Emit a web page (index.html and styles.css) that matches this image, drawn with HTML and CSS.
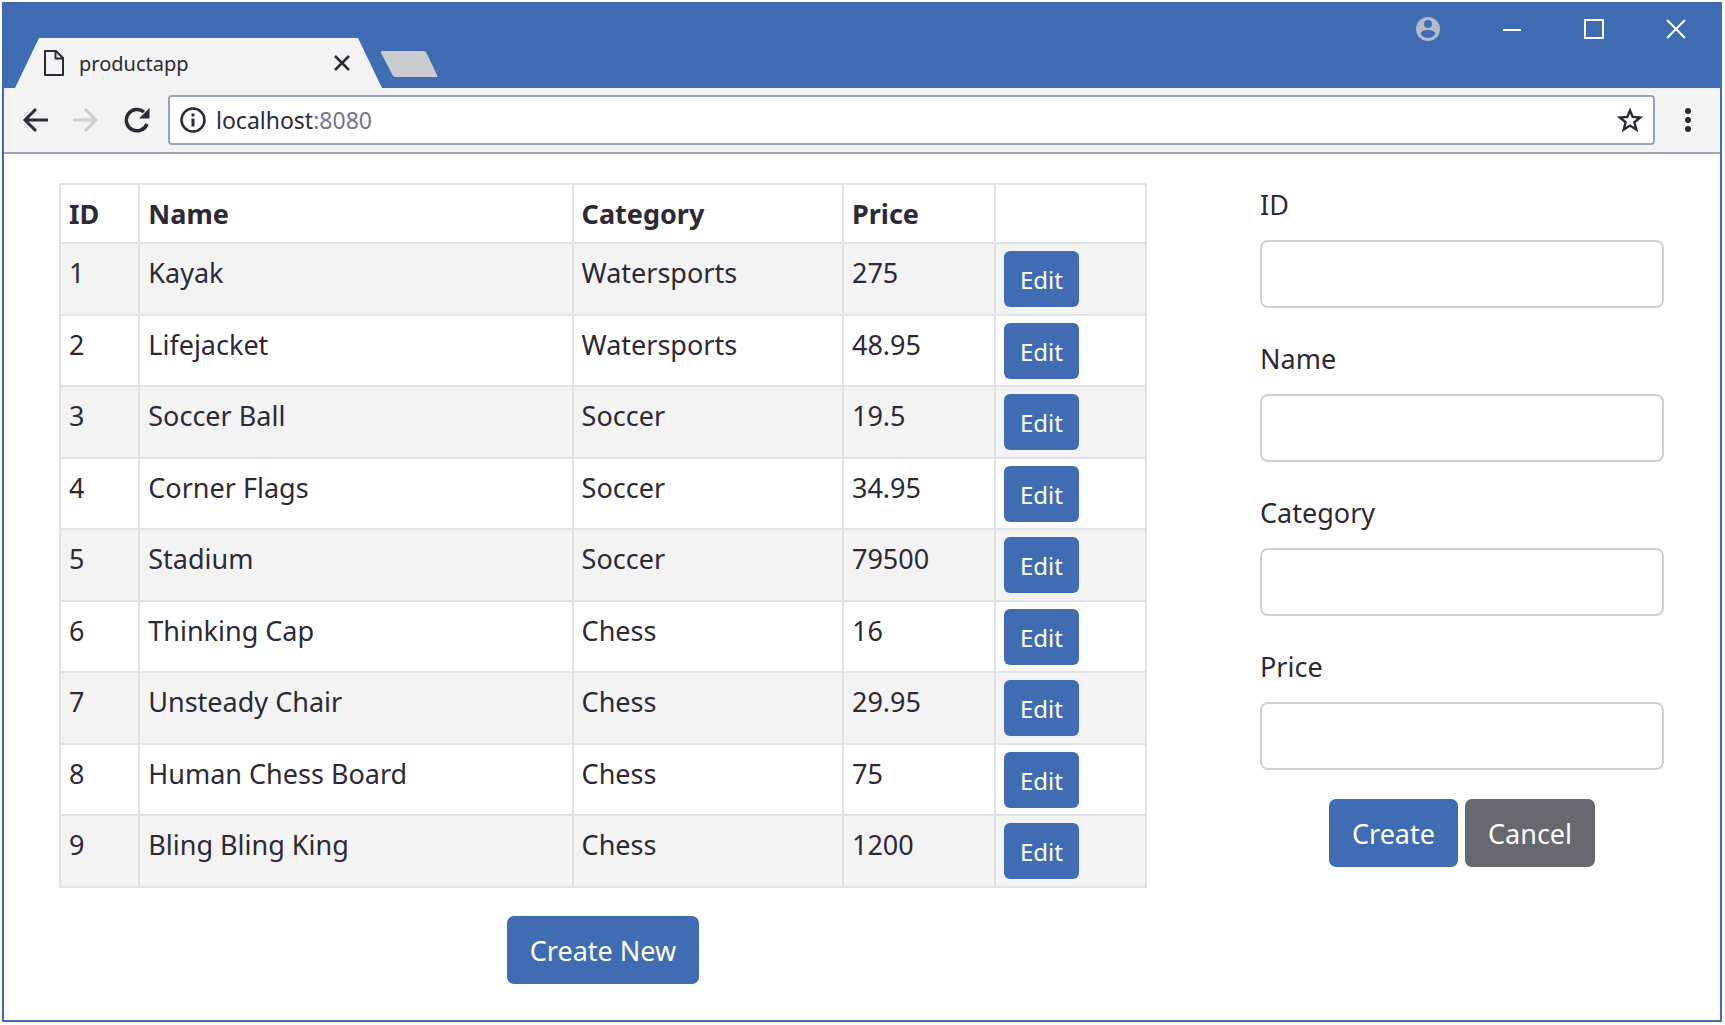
FILE: index.html
```html
<!DOCTYPE html>
<html lang="en">
<head>
<meta charset="utf-8">
<title>productapp</title>
<link rel="stylesheet" href="styles.css">
</head>
<body>
<div class="window">
  <header class="titlebar">
    <div class="tab">
      <svg class="tab-icon" width="20" height="26" viewBox="0 0 20 26" fill="none" stroke="currentColor" stroke-width="2" stroke-linejoin="round"><path d="M1 1h11l7 7v17H1z"/><path d="M11.500 1v7.500H19"/></svg>
      <span class="tab-title">productapp</span>
      <button class="icon-button tab-close" type="button" aria-label="Close tab"><svg width="16" height="16" viewBox="0 0 16 16" fill="none" stroke="currentColor" stroke-width="2.500"><path d="M1 1l14 14M15 1L1 15"/></svg></button>
    </div>
    <button class="icon-button new-tab" type="button" aria-label="New tab"><svg width="58" height="26" viewBox="0 0 58 26"><path fill="#cbcdd0" d="M2 0h41q3 0 4 3l10 21q1 2-1 2H16q-3 0-4-3L1 2Q0 0 2 0z"/></svg></button>
    <div class="window-controls">
      <button class="icon-button profile" type="button" aria-label="Profile"><svg width="24" height="26" viewBox="1 0 24 26"><path fill="currentColor" fill-rule="evenodd" d="M13 1a12 12 0 1 0 0 24 12 12 0 0 0 0-24zM13 4a4 4 0 1 1 0 8 4 4 0 0 1 0-8zM5.500 17.500C7 14.500 10 14 13 14s6 .5 7.500 3.500C19 20.500 16 22 13 22s-6-1.500-7.500-4.500z"/></svg></button>
      <button class="icon-button" type="button" aria-label="Minimize"><svg width="20" height="20" viewBox="0 0 20 20" stroke="currentColor" stroke-width="2"><path d="M1 11h18"/></svg></button>
      <button class="icon-button" type="button" aria-label="Maximize"><svg width="20" height="20" viewBox="0 0 20 20" fill="none" stroke="currentColor" stroke-width="2"><path d="M1 1h18v18H1z"/></svg></button>
      <button class="icon-button" type="button" aria-label="Close"><svg width="20" height="20" viewBox="0 0 20 20" stroke="currentColor" stroke-width="2"><path d="M1 1l18 18M19 1L1 19"/></svg></button>
    </div>
  </header>
  <nav class="toolbar" aria-label="Browser">
    <button class="icon-button" type="button" aria-label="Back"><svg width="26" height="26" viewBox="0 0 26 26" fill="none" stroke="currentColor" stroke-width="3"><path d="M26 13H3M14 2L3 13l11 11"/></svg></button>
    <button class="icon-button forward" type="button" aria-label="Forward"><svg width="26" height="26" viewBox="0 0 26 26" fill="none" stroke="currentColor" stroke-width="3"><path d="M0 13h23M12 2l11 11-11 11"/></svg></button>
    <button class="icon-button" type="button" aria-label="Reload"><svg width="26" height="26" viewBox="0 0 26 26" fill="none" stroke="currentColor" stroke-width="3.500"><path d="M23 17A10.700 10.700 0 1 1 20 5"/><path fill="currentColor" stroke="none" d="M25.500 1v10.500H15z"/></svg></button>
    <div class="address">
      <svg width="26" height="26" viewBox="0 0 26 26" fill="none" stroke="currentColor" stroke-width="2.500"><circle cx="13" cy="13" r="11.500"/><path stroke-width="3" d="M13 11.500v8M13 6.500v3"/></svg>
      <span class="url">localhost<span class="port">:8080</span></span>
      <button class="icon-button" type="button" aria-label="Bookmark"><svg width="26" height="26" viewBox="0 0 26 26" fill="none" stroke="currentColor" stroke-width="2.400"><path d="M13 3.500l2.700 6.400 7.400.6-5.700 4.700 1.900 7.400-6.300-4-6.300 4 1.900-7.400-5.700-4.700 7.400-.6z"/></svg></button>
    </div>
    <button class="icon-button" type="button" aria-label="Menu"><svg width="8" height="26" viewBox="0 0 8 26" fill="currentColor"><circle cx="4" cy="4" r="3"/><circle cx="4" cy="13" r="3"/><circle cx="4" cy="22" r="3"/></svg></button>
  </nav>
  <main class="page">
    <section class="products">
      <table class="product-table">
        <colgroup><col class="col-id"><col class="col-name"><col class="col-category"><col class="col-price"><col class="col-action"></colgroup>
        <thead><tr><th>ID</th><th>Name</th><th>Category</th><th>Price</th><td></td></tr></thead>
        <tbody>
          <tr><td>1</td><td>Kayak</td><td>Watersports</td><td>275</td><td><button class="btn btn-small" type="button">Edit</button></td></tr>
          <tr><td>2</td><td>Lifejacket</td><td>Watersports</td><td>48.95</td><td><button class="btn btn-small" type="button">Edit</button></td></tr>
          <tr><td>3</td><td>Soccer Ball</td><td>Soccer</td><td>19.5</td><td><button class="btn btn-small" type="button">Edit</button></td></tr>
          <tr><td>4</td><td>Corner Flags</td><td>Soccer</td><td>34.95</td><td><button class="btn btn-small" type="button">Edit</button></td></tr>
          <tr><td>5</td><td>Stadium</td><td>Soccer</td><td>79500</td><td><button class="btn btn-small" type="button">Edit</button></td></tr>
          <tr><td>6</td><td>Thinking Cap</td><td>Chess</td><td>16</td><td><button class="btn btn-small" type="button">Edit</button></td></tr>
          <tr><td>7</td><td>Unsteady Chair</td><td>Chess</td><td>29.95</td><td><button class="btn btn-small" type="button">Edit</button></td></tr>
          <tr><td>8</td><td>Human Chess Board</td><td>Chess</td><td>75</td><td><button class="btn btn-small" type="button">Edit</button></td></tr>
          <tr><td>9</td><td>Bling Bling King</td><td>Chess</td><td>1200</td><td><button class="btn btn-small" type="button">Edit</button></td></tr>
        </tbody>
      </table>
      <div class="actions"><button class="btn" type="button">Create New</button></div>
    </section>
    <form class="editor">
      <div class="field"><label for="product-id">ID</label><input id="product-id" type="text"></div>
      <div class="field"><label for="product-name">Name</label><input id="product-name" type="text"></div>
      <div class="field"><label for="product-category">Category</label><input id="product-category" type="text"></div>
      <div class="field"><label for="product-price">Price</label><input id="product-price" type="text"></div>
      <div class="actions"><button class="btn" type="button">Create</button><button class="btn btn-secondary" type="button">Cancel</button></div>
    </form>
  </main>
</div>
</body>
</html>
```
FILE: styles.css
```css
* { box-sizing: border-box; }

body {
  margin: 0;
  padding: 2px 3px 3px 2px;
  background: #fff;
  color: #2d2935;
  font: 27px/43px "Noto Sans", "Open Sans", sans-serif;
}

button, input { font: inherit; color: inherit; }
svg { display: block; flex: none; }

.window {
  display: flex;
  flex-direction: column;
  min-height: calc(100vh - 5px);
  border: 2px solid #406cb3;
  border-top: 0;
}

.icon-button {
  display: block;
  flex: none;
  padding: 0;
  border: 0;
  background: none;
}

/* Browser frame */
.titlebar {
  display: flex;
  align-items: flex-end;
  height: 86px;
  padding-left: 11px;
  background: #406cb3;
}

.tab {
  display: flex;
  align-items: center;
  gap: 15px;
  width: 367px;
  height: 50px;
  padding: 0 32px 0 29px;
  background: #f3f3f3;
  clip-path: polygon(0 100%, 24px 0, 343px 0, 100% 100%);
}

.tab-title {
  flex: 1;
  font-size: 20px;
}

.new-tab { margin-bottom: 11px; margin-left: -2px; }

.window-controls {
  display: flex;
  align-items: center;
  align-self: flex-start;
  gap: 62px;
  margin-left: auto;
  padding: 14px 34px 0 0;
  color: #fff;
}

.profile { color: #b4bccb; }

.toolbar {
  display: flex;
  align-items: center;
  gap: 25px;
  height: 66px;
  padding: 0 28px 0 18px;
  border-bottom: 2px solid #9aa6ba;
  background: #f3f3f3;
}

.forward { color: #cccdd0; }

.address {
  display: flex;
  flex: 1;
  align-items: center;
  gap: 10px;
  height: 50px;
  margin: 0 4px 0 -7px;
  padding: 0 10px;
  border: 2px solid #94a3bd;
  border-radius: 4px;
  background: #fff;
}

.url { flex: 1; font-size: 23px; }
.port { color: #6f7787; }

/* Page content */
.page {
  display: grid;
  grid-template-columns: 1088fr 404fr;
  gap: 113px;
  padding: 29px 56px 28px 55px;
}

.product-table {
  width: 100%;
  border-collapse: collapse;
  table-layout: fixed;
}

.col-id { width: 7.3%; }
.col-name { width: 39.9%; }
.col-category { width: 24.9%; }
.col-price { width: 14%; }

.product-table th,
.product-table td {
  padding: 7px 8px;
  border: 2px solid #dfe3e7;
  text-align: left;
  vertical-align: top;
}

.product-table tbody tr:nth-child(odd) { background: #f3f3f3; }
.product-table tbody tr:nth-child(even) td { padding-bottom: 6px; }

.btn {
  display: block;
  height: 68px;
  padding: 0 23px;
  border: 0;
  border-radius: 7px;
  background: #406cb3;
  color: #fff;
}

.btn-small {
  height: 56px;
  padding: 0 16px;
  border-radius: 6px;
  font-size: 24px;
}

.btn-secondary { background: #67696f; }

.actions {
  display: flex;
  justify-content: center;
  gap: 7px;
}

.products .actions { margin-top: 28px; }

.field {
  display: flex;
  flex-direction: column;
  gap: 14px;
  margin-bottom: 29px;
}

.field input {
  width: 100%;
  height: 68px;
  padding: 0 22px;
  border: 2px solid #cdd1d5;
  border-radius: 8px;
  background: #fff;
}
```
